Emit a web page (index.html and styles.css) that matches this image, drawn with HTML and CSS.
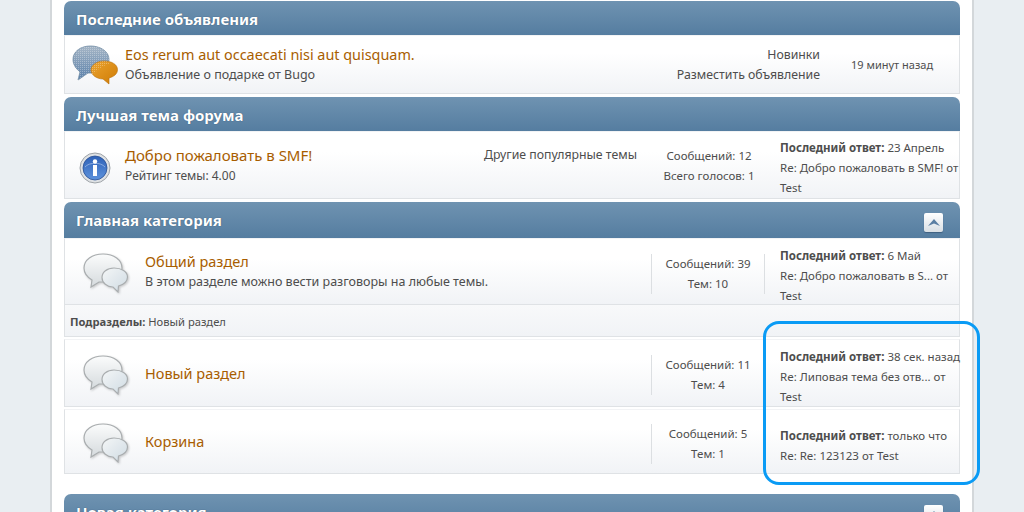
FILE: index.html
```html
<!DOCTYPE html>
<html lang="ru">
<head>
    <meta charset="UTF-8">
    <meta name="viewport" content="width=device-width, initial-scale=1.0">
    <title>Форум</title>
    <link rel="stylesheet" href="styles.css">
</head>
<body>
    <!-- Shared icons -->
    <svg class="defs" width="0" height="0">
        <defs>
            <linearGradient id="greyBig" x1="0" y1="0" x2="0" y2="1">
                <stop offset="0" stop-color="#fbfcfc"/>
                <stop offset="1" stop-color="#d5dadd"/>
            </linearGradient>
            <linearGradient id="greySmall" x1="0" y1="0" x2="1" y2="1">
                <stop offset="0" stop-color="#f4f6f7"/>
                <stop offset="1" stop-color="#cfdbe3"/>
            </linearGradient>
            <linearGradient id="blueBig" x1="0" y1="0" x2="0" y2="1">
                <stop offset="0" stop-color="#a6b6c6"/>
                <stop offset="1" stop-color="#5a80aa"/>
            </linearGradient>
            <linearGradient id="orangeSmall" x1="0" y1="0" x2="1" y2="1">
                <stop offset="0" stop-color="#eba32f"/>
                <stop offset="1" stop-color="#cf7c05"/>
            </linearGradient>
            <linearGradient id="infoBlue" x1="0" y1="0" x2="0" y2="1">
                <stop offset="0" stop-color="#2f62b8"/>
                <stop offset="1" stop-color="#5d92dc"/>
            </linearGradient>
            <pattern id="dither" width="2" height="2" patternUnits="userSpaceOnUse">
                <rect width="1" height="1" fill="#fff" fill-opacity=".3"/>
            </pattern>
            <symbol id="bubbles" viewBox="0 0 46 40">
                <path d="M20 1C9 1 1 7 1 15c0 5 3 9 8 12l-1 7 8-5h4c10 0 19-6 19-14S31 1 20 1z" fill="url(#greyBig)" stroke="#a9adaf" stroke-width="1.2"/>
                <path d="M31 15c-7 0-12 4-12 9.500S24 34 30 34l5 5 .5-6c5-1.500 9-4.500 9-9 0-5.500-6-9-13.500-9z" fill="url(#greySmall)" stroke="#a9adaf" stroke-width="1.2"/>
            </symbol>
        </defs>
    </svg>

    <div class="wrapper">
        <!-- Announcements -->
        <section class="block">
            <h3 class="cat-bar">Последние объявления</h3>
            <div class="row row-news">
                <div class="icon-news">
                    <svg width="46" height="40" viewBox="0 0 46 40">
                        <path d="M18.500 1C8.500 1 1 6.500 1 14.500c0 5.500 3.500 9.500 7 12.500l-2 8 10-7h4c9 0 17-5.500 17-13.500S28.500 1 18.500 1z" fill="url(#blueBig)" stroke="#6f8aa3" stroke-width=".8"/>
                        <path d="M18.500 1C8.500 1 1 6.500 1 14.500c0 5.500 3.500 9.500 7 12.500l-2 8 10-7h4c9 0 17-5.500 17-13.500S28.500 1 18.500 1z" fill="url(#dither)"/>
                        <path d="M32 16c-7 0-13 4-13 9S25 34 31 34l6 5v-6c5-1.500 8.500-4 8.500-8.500 0-5-6-8.500-13.500-8.500z" fill="url(#orangeSmall)" stroke="#b96f0a" stroke-width=".6"/>
                        <path d="M32 16c-7 0-13 4-13 9 0 2 1 4 2 5 4-6 12-10 18-12-2-1.300-4-2-7-2z" fill="url(#dither)"/>
                    </svg>
                </div>
                <div class="info">
                    <a class="title title-news">Eos rerum aut occaecati nisi aut quisquam.</a>
                    <p>Объявление о подарке от Bugo</p>
                </div>
                <div class="links">
                    <p>Новинки</p>
                    <p>Разместить объявление</p>
                </div>
                <div class="time">19 минут назад</div>
            </div>
        </section>

        <!-- Best topic -->
        <section class="block">
            <h3 class="cat-bar">Лучшая тема форума</h3>
            <div class="row row-best">
                <div class="icon-news">
                    <svg class="info-svg" width="32" height="32" viewBox="0 0 32 32">
                        <circle cx="16" cy="16" r="15" fill="#dfe2e5" stroke="#9ea3a8"/>
                        <circle cx="16" cy="16" r="12" fill="url(#infoBlue)" stroke="#2a4f93" stroke-width=".8"/>
                        <path d="M6 15c4-5 16-5 20 0" fill="none" stroke="#9db8e3" stroke-width=".8"/>
                        <circle cx="16" cy="9.500" r="2.200" fill="#fff"/>
                        <rect x="14" y="13" width="4" height="11" fill="#fff"/>
                    </svg>
                </div>
                <div class="info">
                    <a class="title title-best">Добро пожаловать в SMF!</a>
                    <p>Рейтинг темы: 4.00</p>
                </div>
                <div class="links">Другие популярные темы</div>
                <div class="stats">
                    <p>Сообщений: 12</p>
                    <p>Всего голосов: 1</p>
                </div>
                <div class="lastpost">
                    <p class="lastpost-head"><b>Последний ответ:</b> 23 Апрель</p>
                    <p>Re: Добро пожаловать в SMF! от Test</p>
                </div>
            </div>
        </section>

        <!-- Main category -->
        <section class="block">
            <h3 class="cat-bar cat-bar-tall">Главная категория <span class="toggle"><svg width="12" height="8" viewBox="0 0 12 8"><path d="M6 0l6 7-6-2.500L0 7z" fill="#5b7fa3"/></svg></span></h3>
            <div class="row board board-first">
                <svg class="bubble" width="46" height="40"><use href="#bubbles"/></svg>
                <div class="info">
                    <a class="title">Общий раздел</a>
                    <p>В этом разделе можно вести разговоры на любые темы.</p>
                </div>
                <div class="stats">
                    <p>Сообщений: 39</p>
                    <p>Тем: 10</p>
                </div>
                <div class="lastpost">
                    <p class="lastpost-head"><b>Последний ответ:</b> 6 Май</p>
                    <p>Re: Добро пожаловать в S... от Test</p>
                </div>
            </div>
            <div class="children"><b>Подразделы:</b> Новый раздел</div>
            <div class="row board board-mid">
                <svg class="bubble" width="46" height="40"><use href="#bubbles"/></svg>
                <div class="info"><a class="title">Новый раздел</a></div>
                <div class="stats">
                    <p>Сообщений: 11</p>
                    <p>Тем: 4</p>
                </div>
                <div class="lastpost">
                    <p class="lastpost-head"><b>Последний ответ:</b> 38 сек. назад</p>
                    <p>Re: Липовая тема без отв... от Test</p>
                </div>
            </div>
            <div class="row board board-last">
                <svg class="bubble" width="46" height="40"><use href="#bubbles"/></svg>
                <div class="info"><a class="title">Корзина</a></div>
                <div class="stats">
                    <p>Сообщений: 5</p>
                    <p>Тем: 1</p>
                </div>
                <div class="lastpost">
                    <p class="lastpost-head"><b>Последний ответ:</b> только что</p>
                    <p>Re: Re: 123123 от Test</p>
                </div>
            </div>
        </section>

        <!-- Next category, cut off by the window -->
        <section class="block block-next">
            <h3 class="cat-bar cat-bar-tall">Новая категория <span class="toggle"><svg width="12" height="8" viewBox="0 0 12 8"><path d="M6 0l6 7-6-2.500L0 7z" fill="#5b7fa3"/></svg></span></h3>
        </section>

        <!-- Highlight drawn over the last posts -->
        <div class="highlight"></div>
    </div>
</body>
</html>
```

FILE: styles.css
```css
* {
    margin: 0;
    padding: 0;
    box-sizing: border-box;
}

html, body {
    height: 512px;
    overflow: hidden;
}

body {
    background-color: #e9eef2;
    font-family: 'Noto Sans', 'Open Sans', sans-serif;
    font-size: 12px;
    color: #4d4d4d;
}

.defs {
    position: absolute;
}

.wrapper {
    position: relative;
    width: 924px;
    height: 512px;
    margin-left: 50px;
    padding: 1px 12px 0;
    background-color: #fff;
    border-left: 2px solid #d3d7da;
    border-right: 2px solid #d3d7da;
}

.block {
    margin-bottom: 3px;
}

.block-next {
    margin-top: 20px;
}

.cat-bar {
    display: flex;
    justify-content: space-between;
    align-items: center;
    height: 34px;
    padding: 2px 12px 0;
    background: linear-gradient(#6f93b1, #557da0);
    border-radius: 7px 7px 0 0;
    color: #fff;
    font-size: 15px;
    font-weight: bold;
    text-shadow: 0 0 1px #2d4a66;
}

.cat-bar-tall {
    height: 36px;
    padding-top: 0;
}

.toggle {
    display: flex;
    justify-content: center;
    align-items: center;
    width: 19px;
    height: 19px;
    margin: 5px 5px 0 0;
    background: linear-gradient(#fff, #d9dfe4);
    border-radius: 2px;
    box-shadow: 0 1px 1px #3f6080;
}

.row {
    display: flex;
    align-items: center;
    background: linear-gradient(#fff 30%, #f1f3f6);
    border: 1px solid #dfe2e5;
    border-top-color: #f2f3f5;
    line-height: 20px;
}

.row-news {
    height: 59px;
}

.row-best {
    height: 68px;
}

.icon-news {
    display: flex;
    justify-content: center;
    width: 60px;
    flex-shrink: 0;
}

.info-svg {
    margin-top: 5px;
}

.info {
    flex: 1;
    min-width: 0;
    font-size: 12.5px;
}

.row-best .info p {
    font-size: 12px;
}

.title {
    display: block;
    color: #a85d00;
    font-size: 14.5px;
    line-height: 21px;
}

.title-news {
    font-size: 14.4px;
}

.title-best {
    font-size: 15px;
}

.links {
    text-align: right;
    font-size: 12.3px;
}

.row-news .links {
    margin-right: 31px;
}

.row-news .time {
    width: 108px;
    font-size: 11px;
}

.row-best .links {
    margin: -20px 15px 0 0;
}

.stats {
    width: 114px;
    margin-top: 2px;
    text-align: center;
    font-size: 11.5px;
    flex-shrink: 0;
}

.board .stats {
    height: 40px;
    margin-top: 4px;
    border-left: 1px solid #dcdfe2;
    border-right: 1px solid #dcdfe2;
}

.lastpost {
    width: 179px;
    margin-top: 6px;
    font-size: 11.5px;
    flex-shrink: 0;
}

.lastpost-head {
    white-space: nowrap;
}

.row-best .stats {
    margin-right: 14px;
}

.board {
    padding-left: 18px;
}

.board .lastpost {
    margin: 8px 0 0 15px;
}

.board .info {
    margin-left: 16px;
}

.bubble {
    flex-shrink: 0;
    margin-top: 3px;
    filter: drop-shadow(1px 1px 1px rgba(0, 0, 0, 0.2));
}

.board-first {
    height: 67px;
    border-bottom: 1px solid #dfe2e5;
}

.board-mid {
    height: 68px;
    margin-bottom: 2px;
}

.board-last {
    height: 65px;
}

.children {
    height: 32px;
    margin-bottom: 2px;
    padding: 0 5px;
    background: linear-gradient(#f8f9fa, #f1f3f6);
    border: 1px solid #dfe2e5;
    border-top: none;
    font-size: 11.2px;
    line-height: 33px;
}

.highlight {
    position: absolute;
    left: 711px;
    top: 321px;
    width: 217px;
    height: 164px;
    border: 3px solid #0a9bf5;
    border-radius: 16px;
}
```
